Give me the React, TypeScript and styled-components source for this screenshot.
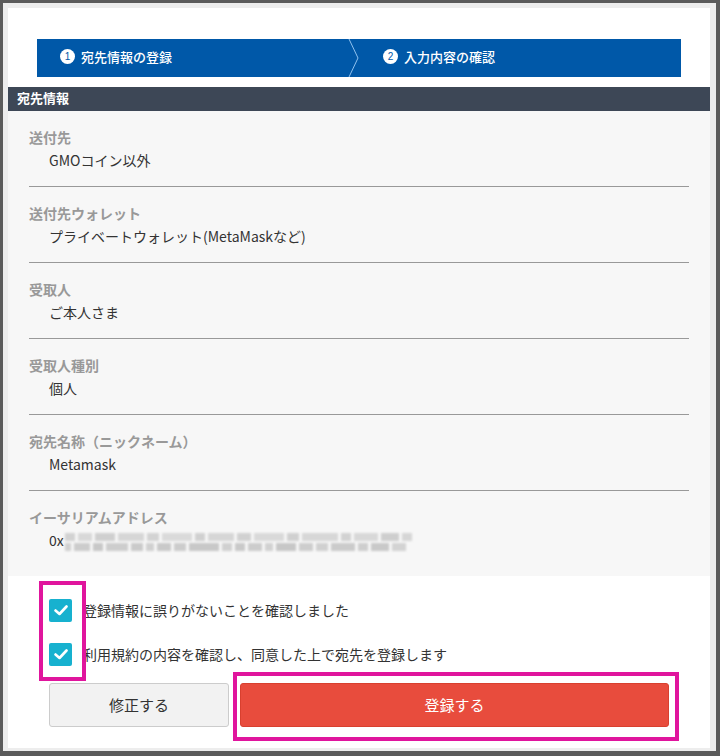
import React from "react";
import styled, { createGlobalStyle } from "styled-components";

const Global = createGlobalStyle`
  html, body { margin: 0; padding: 0; }
  body {
    background: #5b5b5b;
    font-family: "Noto Sans CJK JP", "Noto Sans", sans-serif;
    width: 720px; height: 756px; overflow: hidden;
  }
`;

const Frame = styled.div`
  box-sizing: border-box;
  margin: 3px 4px 0 3px;
  height: 748px;
  background: #ededed;
  padding: 5px 6px 0 5px;
`;

const Card = styled.div`
  background: #fff;
  height: 740px;
  display: flex;
  flex-direction: column;
`;

const Steps = styled.div`
  margin: 31px 29px 0 29px;
  height: 38px;
  background: #0058a8;
  display: flex;
  align-items: center;
  color: #fff;
  font-size: 13px;
  font-weight: 500;
  line-height: 16px;
`;

const Step = styled.div<{ $w?: number }>`
  display: flex;
  align-items: center;
  gap: 6px;
  height: 100%;
  padding-bottom: 3px;
  ${(p) => (p.$w ? `width: ${p.$w}px;` : "flex: 1;")}
  padding-left: 23px;
  box-sizing: border-box;
`;

const Num = styled.span`
  width: 15px;
  height: 15px;
  border-radius: 50%;
  background: #fff;
  color: #0058a8;
  font-size: 10px;
  font-family: "Liberation Sans", sans-serif;
  display: inline-flex;
  align-items: center;
  justify-content: center;
`;

const Chevron = styled.svg`
  width: 12px;
  height: 38px;
  flex: none;
`;

const SectionHead = styled.div`
  margin-top: 10px;
  height: 24px;
  background: #3d4756;
  color: #fff;
  font-weight: 700;
  font-size: 13px;
  display: flex;
  align-items: center;
  padding: 0 0 3px 9px;
  box-sizing: border-box;
`;

const Body = styled.div`
  background: #f7f7f7;
  padding: 0 21px 0 21px;
  height: 465px;
`;

const Row = styled.div<{ $last?: boolean }>`
  height: 76px;
  box-sizing: border-box;
  border-bottom: ${(p) => (p.$last ? "none" : "1px solid #999")};
  padding-top: 16px;
`;

const Label = styled.div`
  color: #999;
  font-weight: 700;
  font-size: 14px;
  line-height: 20px;
`;

const Value = styled.div`
  color: #333;
  font-size: 14px;
  line-height: 22px;
  padding-left: 20px;
  margin-top: 2px;
  display: flex;
  align-items: center;
`;

const Blur = styled.div`
  display: flex;
  flex-wrap: wrap;
  width: 352px;
  row-gap: 2px;
  column-gap: 3px;
  margin-left: 1px;
  margin-top: 4px;
  filter: blur(1.3px);
`;

const Blk = styled.span<{ $w: number; $c: string }>`
  display: inline-block;
  width: ${(p) => p.$w}px;
  height: 8px;
  background: ${(p) => p.$c};
`;

const Bottom = styled.div`
  position: relative;
  padding: 22px 0 0 41px;
`;

const CheckRow = styled.div`
  display: flex;
  align-items: center;
  height: 24px;
  margin-bottom: 20px;
  font-size: 14px;
  color: #333;
`;

const Box = styled.span`
  width: 23px;
  height: 23px;
  background: #17b1cf;
  border-radius: 2px;
  display: inline-flex;
  align-items: center;
  justify-content: center;
  margin-right: 11px;
`;

const Highlight = styled.div<{ $l: number; $t: number; $w: number; $h: number }>`
  position: absolute;
  left: ${(p) => p.$l}px;
  top: ${(p) => p.$t}px;
  width: ${(p) => p.$w}px;
  height: ${(p) => p.$h}px;
  border: 4px solid #e0159d;
  box-sizing: border-box;
  pointer-events: none;
`;

const Buttons = styled.div`
  display: flex;
  gap: 11px;
  margin-top: -3px;
  width: 620px;
`;

const Btn = styled.div<{ $primary?: boolean }>`
  height: 44px;
  display: flex;
  align-items: center;
  justify-content: center;
  font-size: 15px;
  padding-bottom: 2px;
  box-sizing: border-box;
  border-radius: 3px;
  ${(p) =>
    p.$primary
      ? `flex: 1; background: #e84c3d; color: #fff; border: 1px solid #d8402f;`
      : `width: 180px; background: #f2f2f2; color: #333; border: 1px solid #ccc;`}
`;

const rows = [
  ["送付先", "GMOコイン以外"],
  ["送付先ウォレット", "プライベートウォレット(MetaMaskなど)"],
  ["受取人", "ご本人さま"],
  ["受取人種別", "個人"],
  ["宛先名称（ニックネーム）", "Metamask"],
];

const blur: [number, string][] = [
  [10, "#d2d2d2"], [14, "#d8d8d8"], [20, "#cfcfcf"], [26, "#d6d6d6"], [12, "#d3d3d3"],
  [30, "#dadada"], [10, "#d0d0d0"], [26, "#d6d6d6"], [14, "#d1d1d1"], [30, "#d9d9d9"],
  [12, "#d0d0d0"], [36, "#d7d7d7"], [10, "#d2d2d2"], [24, "#d8d8d8"], [18, "#cecece"],
  [10, "#d6d6d6"],
  [6, "#d0d0d0"], [16, "#cccccc"], [10, "#c8c8c8"], [22, "#cdcdcd"], [12, "#cacaca"],
  [8, "#d0d0d0"], [14, "#c9c9c9"], [12, "#cccccc"], [30, "#c8c8c8"], [10, "#d0d0d0"],
  [10, "#c9c9c9"], [14, "#cccccc"], [8, "#d1d1d1"], [20, "#c7c7c7"], [14, "#cdcdcd"],
  [12, "#d0d0d0"], [24, "#cbcbcb"], [10, "#cecece"], [18, "#c9c9c9"], [14, "#d3d3d3"],
];

const Check = () => (
  <svg width="14" height="11" viewBox="0 0 14 11">
    <path d="M1.5 5.5 L5.5 9 L12.5 1.5" stroke="#fff" strokeWidth="2.6" fill="none" strokeLinecap="round" strokeLinejoin="round" />
  </svg>
);

export default function App() {
  return (
    <>
      <Global />
      <Frame>
        <Card>
          <Steps>
            <Step $w={311}>
              <Num>1</Num>宛先情報の登録
            </Step>
            <Chevron viewBox="0 0 12 38">
              <path d="M1 0 L10 19 L1 38" stroke="#8fc1ee" strokeWidth="1" fill="none" />
            </Chevron>
            <Step>
              <Num>2</Num>入力内容の確認
            </Step>
          </Steps>
          <SectionHead>宛先情報</SectionHead>
          <Body>
            {rows.map(([l, v]) => (
              <Row key={l}>
                <Label>{l}</Label>
                <Value>{v}</Value>
              </Row>
            ))}
            <Row $last>
              <Label>イーサリアムアドレス</Label>
              <Value>
                0x
                <Blur>
                  {blur.map(([w, c], i) => (
                    <Blk key={i} $w={w} $c={c} />
                  ))}
                </Blur>
              </Value>
            </Row>
          </Body>
          <Bottom>
            <CheckRow>
              <Box><Check /></Box>登録情報に誤りがないことを確認しました
            </CheckRow>
            <CheckRow>
              <Box><Check /></Box>利用規約の内容を確認し、同意した上で宛先を登録します
            </CheckRow>
            <Buttons>
              <Btn>修正する</Btn>
              <Btn $primary>登録する</Btn>
            </Buttons>
            <Highlight $l={31} $t={5} $w={47} $h={100} />
            <Highlight $l={225} $t={96} $w={446} $h={69} />
          </Bottom>
        </Card>
      </Frame>
    </>
  );
}
